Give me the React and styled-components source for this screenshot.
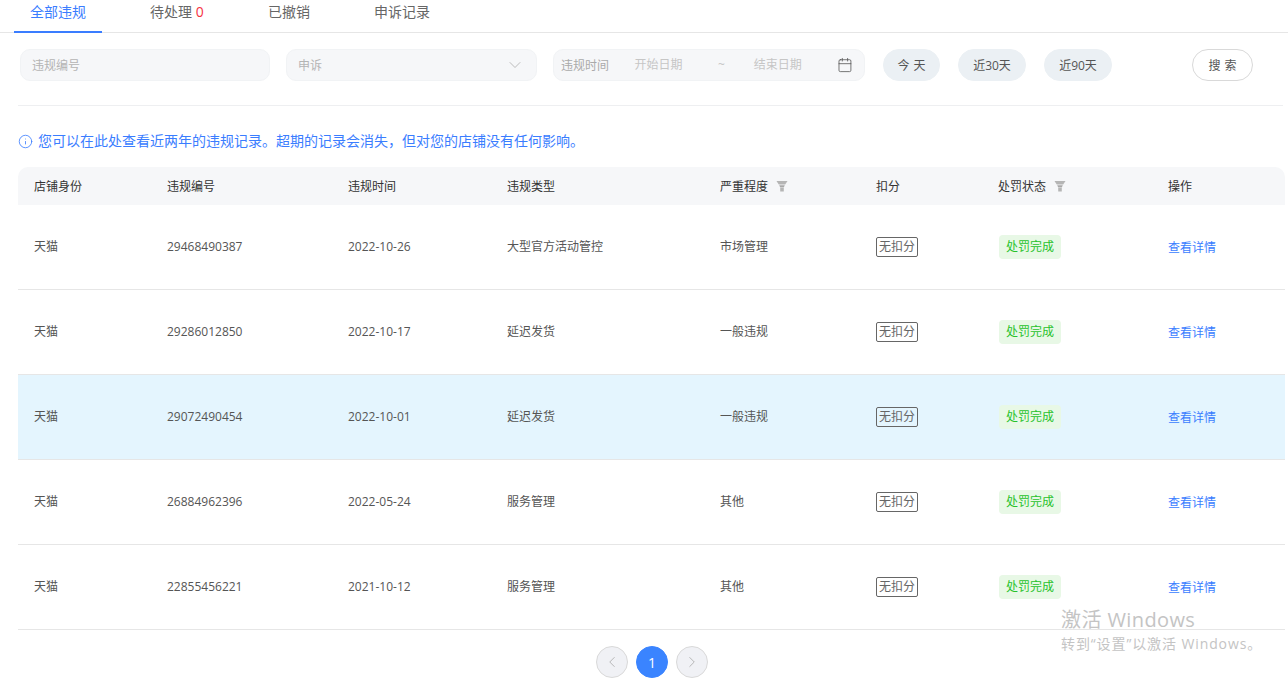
import React from 'react';
import styled, { createGlobalStyle } from 'styled-components';
import { Calendar, ChevronDown, ChevronLeft, ChevronRight, Info } from 'lucide-react';

const Global = createGlobalStyle`
	html, body {
		margin: 0;
		padding: 0;
		background: #fff;
		overflow: hidden;
	}
	body {
		font-family: "Open Sans", "Noto Sans CJK SC", sans-serif;
		font-size: 12px;
		color: #555;
	}
	* {
		box-sizing: border-box;
	}
`;

const Page = styled.div`
	position: relative;
	width: 1288px;
	height: 679px;
	overflow: hidden;
`;

const Tabs = styled.div`
	display: flex;
	height: 33px;
	padding-left: 14px;
	border-bottom: 1px solid #e6e6e6;
`;

const Tab = styled.div`
	width: ${(p) => p.$width}px;
	height: 33px;
	padding-left: ${(p) => p.$pad}px;
	font-size: 14px;
	line-height: 24px;
	color: ${(p) => (p.$active ? '#3a7dff' : '#666')};
	border-bottom: 2px solid ${(p) => (p.$active ? '#3a7dff' : 'transparent')};

	& em {
		font-style: normal;
		color: #f5333f;
	}
`;

const FilterBar = styled.div`
	display: flex;
	align-items: center;
	margin: 16px 5px 0 18px;
	padding: 0 0 24px 2px;
	border-bottom: 1px solid #eeeff1;
`;

const Field = styled.div`
	display: flex;
	align-items: center;
	width: ${(p) => p.$width}px;
	height: 32px;
	margin-right: ${(p) => (p.$date ? 18 : 16)}px;
	padding-right: ${(p) => (p.$date ? 11 : 11)}px;
	padding-left: ${(p) => (p.$date ? 7 : 11)}px;
	background: #f6f7f9;
	border: 1px solid #f1f3f5;
	border-radius: 10px;
	color: #b4b4b4;
	font-size: 12px;
`;

const FieldLabel = styled.span`
	flex: 1;
`;

const DateLabel = styled.span`
	width: 74px;
	color: #aaa;
`;

const DateValue = styled.span`
	width: ${(p) => p.$width}px;
	color: #c6c6c6;
	position: relative;
	top: -1px;
`;

const Pill = styled.button`
	width: ${(p) => p.$width}px;
	height: 32px;
	margin-right: 18px;
	padding: 0 0 0 ${(p) => p.$spacing || 0}px;
	border: 1px solid ${(p) => (p.$outline ? '#d9d9d9' : '#ebf0f4')};
	border-radius: 16px;
	background: ${(p) => (p.$outline ? '#fff' : '#ebf0f4')};
	color: #555;
	font: inherit;
	font-size: 12px;
	letter-spacing: ${(p) => p.$spacing || 0}px;
`;

const SearchPill = styled(Pill)`
	margin: 0 0 0 62px;
`;

const Notice = styled.div`
	display: flex;
	align-items: center;
	gap: 5px;
	height: 20px;
	margin: 25px 0 16px 18px;
	color: #3a7dff;
	font-size: 14px;
	line-height: 20px;
`;

const Table = styled.div`
	margin: 0 3px 0 18px;
`;

const Columns = styled.div`
	display: grid;
	grid-template-columns: 133px 181px 159px 213px 156px 122px 170px 1fr;
	align-items: center;
	padding-left: 16px;
`;

const HeadRow = styled(Columns)`
	height: 38px;
	background: #f6f7f9;
	border-radius: 10px 10px 0 0;
	color: #333;
`;

const HeadCell = styled.div`
	display: flex;
	align-items: center;
	gap: 8px;
`;

const Row = styled(Columns)`
	height: 85px;
	background: ${(p) => (p.$active ? '#e4f5fe' : '#fff')};
	border-bottom: 1px solid #e6e6e6;
`;

const Cell = styled.div`
	line-height: 18px;
`;

const ScoreTag = styled.span`
	display: inline-block;
	height: 20px;
	padding: 0 2px;
	border: 1px solid #666;
	border-radius: 2px;
	font-size: 12px;
	line-height: 18px;
	color: #666;
`;

const StatusTag = styled.span`
	display: inline-block;
	height: 24px;
	margin-left: 1px;
	padding: 0 7px;
	border-radius: 4px;
	background: #e8f8e6;
	color: #27c22b;
	line-height: 24px;
`;

const DetailLink = styled.a`
	display: inline-block;
	margin-top: 2px;
	color: #3a7dff;
	cursor: pointer;
`;

const Pagination = styled.div`
	display: flex;
	justify-content: center;
	gap: 8px;
	margin-top: 16px;
	padding-left: 16px;
`;

const PageButton = styled.div`
	display: flex;
	align-items: center;
	justify-content: center;
	width: 32px;
	height: 32px;
	border-radius: 50%;
	border: 1px solid ${(p) => (p.$current ? '#3a84ff' : '#d9d9d9')};
	background: ${(p) => (p.$current ? '#3a84ff' : '#f0f1f5')};
	color: ${(p) => (p.$current ? '#fff' : '#aaa')};
	font-size: 14px;
`;

const Watermark = styled.div`
	position: absolute;
	left: 1061px;
	top: 607px;
	color: #c4c4c4;
	pointer-events: none;
	white-space: nowrap;
`;

const WatermarkTitle = styled.div`
	font-size: 20px;
	line-height: 26px;
	letter-spacing: 0.4px;
`;

const WatermarkText = styled.div`
	font-size: 14px;
	line-height: 20px;
	margin-top: 1px;
	letter-spacing: 0.9px;
`;

const tabs = [
	{ label: '全部违规', width: 88, pad: 16, active: true },
	{ label: '待处理', count: 0, width: 118, pad: 48 },
	{ label: '已撤销', width: 107, pad: 48 },
	{ label: '申诉记录', width: 120, pad: 47 },
];

const columns = ['店铺身份', '违规编号', '违规时间', '违规类型', '严重程度', '扣分', '处罚状态', '操作'];

const rows = [
	{ id: '29468490387', date: '2022-10-26', type: '大型官方活动管控', level: '市场管理' },
	{ id: '29286012850', date: '2022-10-17', type: '延迟发货', level: '一般违规' },
	{ id: '29072490454', date: '2022-10-01', type: '延迟发货', level: '一般违规', active: true },
	{ id: '26884962396', date: '2022-05-24', type: '服务管理', level: '其他' },
	{ id: '22855456221', date: '2021-10-12', type: '服务管理', level: '其他' },
];

const FilterIcon = () => (
	<svg width="12" height="12" viewBox="0 0 12 12">
		<path d="M0.5 1h11L9.2 4.6H2.8z" fill="#b5b5b5" />
		<path d="M3.2 5.2h5.6L7.8 7.4H4.2z" fill="#a8a8a8" />
		<path d="M4.2 8h3.6v3.5H4.2z" fill="#b5b5b5" />
	</svg>
);

const App = () => (
	<Page>
		<Global />
		<Tabs>
			{tabs.map((t) => (
				<Tab key={t.label} $width={t.width} $pad={t.pad} $active={t.active}>
					{t.label}
					{t.count !== undefined && <em> {t.count}</em>}
				</Tab>
			))}
		</Tabs>
		<FilterBar>
			<Field $width={250}>
				<FieldLabel>违规编号</FieldLabel>
			</Field>
			<Field $width={251}>
				<FieldLabel>申诉</FieldLabel>
				<ChevronDown size={20} strokeWidth={1} color="#b0b0b0" />
			</Field>
			<Field $width={312} $date>
				<DateLabel>违规时间</DateLabel>
				<DateValue $width={84}>开始日期</DateValue>
				<DateValue $width={36}>~</DateValue>
				<DateValue $width={84}>结束日期</DateValue>
				<Calendar size={16} strokeWidth={1.2} color="#555" />
			</Field>
			<Pill $width={57} $spacing={4}>今天</Pill>
			<Pill $width={68}>近30天</Pill>
			<Pill $width={68}>近90天</Pill>
			<SearchPill $width={61} $outline $spacing={4}>搜索</SearchPill>
		</FilterBar>
		<Notice>
			<Info size={15} strokeWidth={1.3} />
			您可以在此处查看近两年的违规记录。超期的记录会消失，但对您的店铺没有任何影响。
		</Notice>
		<Table>
			<HeadRow>
				{columns.map((c) => (
					<HeadCell key={c}>
						{c}
						{(c === '严重程度' || c === '处罚状态') && <FilterIcon />}
					</HeadCell>
				))}
			</HeadRow>
			{rows.map((r) => (
				<Row key={r.id} $active={r.active}>
					<Cell>天猫</Cell>
					<Cell>{r.id}</Cell>
					<Cell>{r.date}</Cell>
					<Cell>{r.type}</Cell>
					<Cell>{r.level}</Cell>
					<Cell>
						<ScoreTag>无扣分</ScoreTag>
					</Cell>
					<Cell>
						<StatusTag>处罚完成</StatusTag>
					</Cell>
					<Cell>
						<DetailLink>查看详情</DetailLink>
					</Cell>
				</Row>
			))}
		</Table>
		<Pagination>
			<PageButton>
				<ChevronLeft size={18} strokeWidth={1.1} />
			</PageButton>
			<PageButton $current>1</PageButton>
			<PageButton>
				<ChevronRight size={18} strokeWidth={1.1} />
			</PageButton>
		</Pagination>
		<Watermark>
			<WatermarkTitle>激活 Windows</WatermarkTitle>
			<WatermarkText>转到“设置”以激活 Windows。</WatermarkText>
		</Watermark>
	</Page>
);

export default App;
